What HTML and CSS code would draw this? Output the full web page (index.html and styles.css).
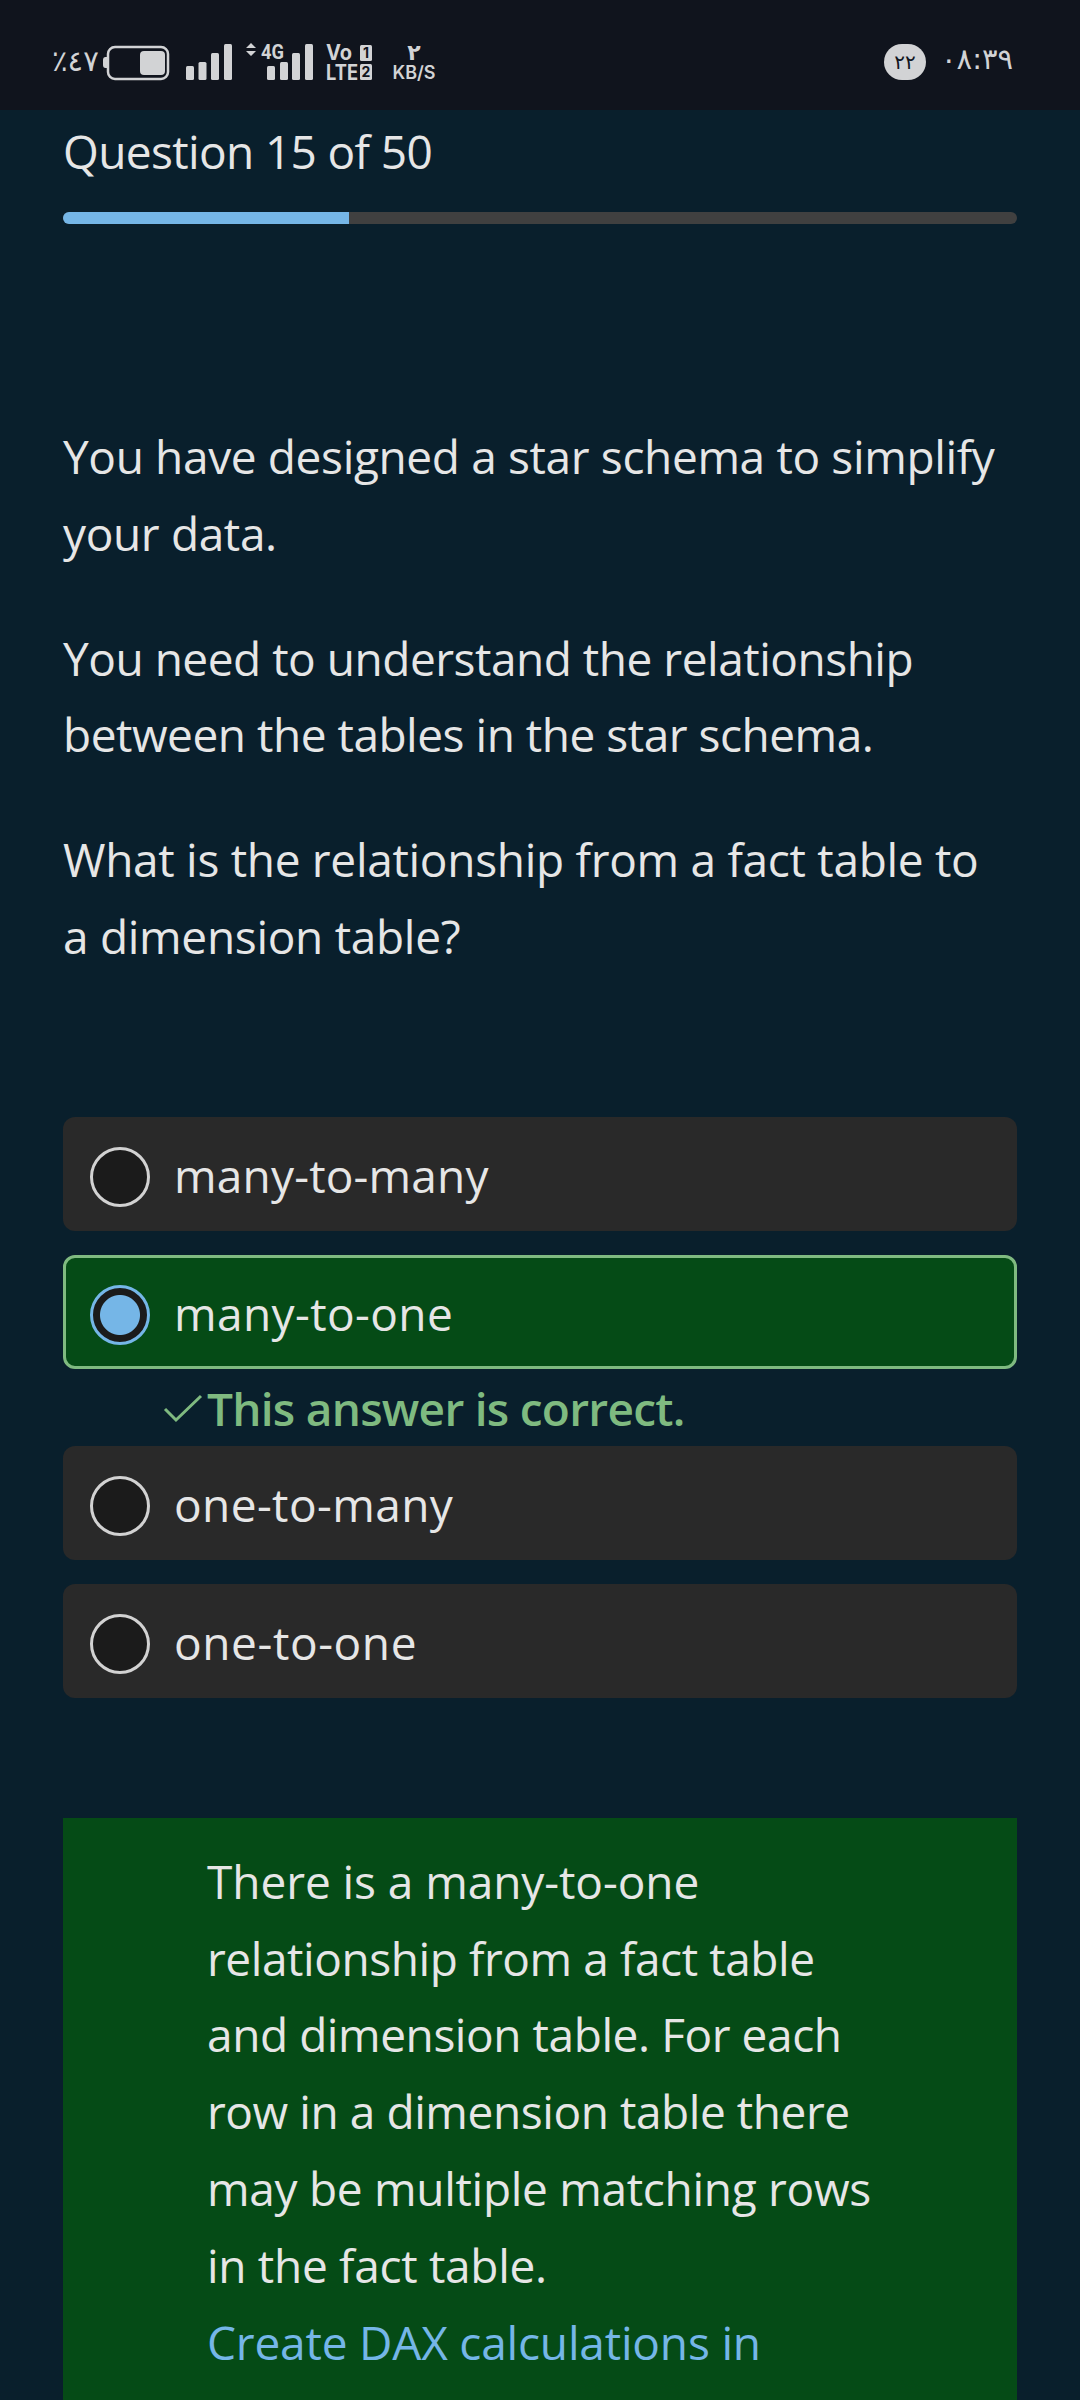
FILE: index.html
```html
<!DOCTYPE html>
<html lang="en">
<head>
<meta charset="utf-8">
<title>Practice assessment</title>
<link rel="stylesheet" href="styles.css">
</head>
<body>
<header class="status">
  <span class="percent"><bdo dir="ltr">٪٤٧</bdo></span>
  <svg class="battery" width="68" height="36" viewBox="0 0 68 36"><path d="M5 12H3.500Q1 12 1 15V20Q1 23 3.500 23H5Z" fill="#d2d3d5"/><rect x="6" y="2" width="60" height="32" rx="7" fill="none" stroke="#d2d3d5" stroke-width="2.500"/><rect x="38" y="6" width="25" height="24" rx="4" fill="#d2d3d5"/></svg>
  <svg class="bars" width="46" height="36" viewBox="0 0 46 36" fill="#d2d3d5"><rect x="0" y="22" width="8" height="14" rx="1.500"/><rect x="12.500" y="18" width="8" height="18" rx="1.500"/><rect x="25" y="9" width="8" height="27" rx="1.500"/><rect x="38" y="0" width="8" height="36" rx="1.500"/></svg>
  <svg class="mobile" width="67" height="38" viewBox="0 0 67 38" fill="#d2d3d5"><path d="M0 6L5 1L10 6ZM0 9H10L5 14Z"/><text class="gen" x="15" y="17" textLength="23" lengthAdjust="spacingAndGlyphs">4G</text><rect x="21" y="24" width="8" height="14" rx="1.500"/><rect x="34" y="20" width="8" height="18" rx="1.500"/><rect x="46" y="11" width="8" height="27" rx="1.500"/><rect x="59" y="2" width="8" height="36" rx="1.500"/></svg>
  <svg class="volte" width="47" height="38" viewBox="0 0 47 38" fill="#d2d3d5"><text class="vo" x="0" y="17" textLength="26" lengthAdjust="spacingAndGlyphs">Vo</text><text class="vo" x="0" y="37" textLength="32" lengthAdjust="spacingAndGlyphs">LTE</text><rect x="34" y="2" width="12" height="16" rx="1.500"/><rect x="34" y="21" width="12" height="16" rx="1.500"/><text class="sim" x="40" y="15">1</text><text class="sim" x="40" y="34">2</text></svg>
  <span class="speed"><span class="rate">۲</span><span class="unit">KB/S</span></span>
  <span class="badge">۲۲</span>
  <span class="clock"><bdo dir="ltr">۰۸:۳۹</bdo></span>
</header>
<main class="page">
  <h1 class="title">Question 15 of 50</h1>
  <div class="progress"><div class="progress-fill" style="width:30%"></div></div>
  <section class="question">
    <p>You have designed a star schema to simplify<br>your data.</p>
    <p class="tight">You need to understand the relationship<br>between the tables in the star schema.</p>
    <p class="loose">What is the relationship from a fact table to<br>a dimension table?</p>
  </section>
  <section class="options">
    <div class="option"><span class="radio"></span><span class="label">many-to-many</span></div>
    <div class="option correct"><span class="radio checked"></span><span class="label wide">many-to-one</span></div>
    <div class="result"><svg width="40" height="30" viewBox="0 0 40 30"><path d="M2 15L13 26L38 2" fill="none" stroke="#7fba80" stroke-width="3"/></svg><span>This answer is correct.</span></div>
    <div class="option"><span class="radio"></span><span class="label wide">one-to-many</span></div>
    <div class="option"><span class="radio"></span><span class="label wider">one-to-one</span></div>
  </section>
  <section class="explain">
    <p><span class="lead">There is a many-to-one</span><br>relationship from a fact table<br>and dimension table. For each<br>row in a dimension table there<br><span class="loose">may be multiple matching rows</span><br><span class="loose">in the fact table.</span><br><a>Create DAX calculations in</a></p>
  </section>
</main>
</body>
</html>
```
FILE: styles.css
```css
* { box-sizing: border-box; }
body { margin: 0; width: 1080px; height: 2400px; overflow: hidden; background: #091f2c; color: #e6e6e6; font: 46px/76.8px "Open Sans", sans-serif; white-space: nowrap; }
p, h1 { margin: 0; font-weight: 400; }
.status { height: 110px; background: #10141d; color: #d2d3d5; display: flex; align-items: flex-start; padding-left: 52px; line-height: 1; }
.percent { width: 50px; margin-top: 44px; font: 29px/34px "DejaVu Sans", sans-serif; }
.battery { margin-top: 45px; }
.bars { margin: 44px 0 0 16px; }
.mobile { margin: 42px 0 0 14px; }
.volte { margin: 43px 0 0 13px; }
.status svg { overflow: visible; flex: none; }
.gen { font: 700 21px Roboto, sans-serif; }
.vo { font: 700 21px Inter, sans-serif; }
.sim { font: 700 14px Inter, sans-serif; fill: #10141d; text-anchor: middle; }
.speed { margin: 43px 0 0 17px; width: 48px; display: flex; flex-direction: column; align-items: center; }
.rate { font: 700 22px/20px "DejaVu Sans", sans-serif; }
.unit { font: 600 18px/20px Inter, sans-serif; }
.badge { margin: 44px 0 0 446px; width: 42px; height: 36px; border-radius: 18px; background: #d2d3d5; color: #10141d; font: 20px/36px "DejaVu Sans", sans-serif; text-align: center; }
.clock { margin: 42px 0 0 15px; font: 29px/34px "DejaVu Sans", sans-serif; letter-spacing: -1.5px; }
.page { padding: 0 63px; }
.title { font-size: 46px; line-height: 72px; padding-top: 5px; letter-spacing: -.63px; }
.progress { height: 12px; margin-top: 25px; border-radius: 6px; background: #404040; overflow: hidden; }
.progress-fill { height: 12px; background: #75b6e7; }
.question { padding-top: 194px; display: flex; flex-direction: column; gap: 48px; letter-spacing: -.36px; }
.tight { letter-spacing: -.48px; }
.loose { letter-spacing: -.3px; }
.options { margin-top: 142px; }
.option { height: 114px; margin-bottom: 24px; border-radius: 12px; background: #292929; padding-left: 27px; display: flex; align-items: center; gap: 24px; border: 0 solid #7fba80; }
.correct { background: #054b16; border-width: 3px; padding-left: 24px; margin-bottom: 0; }
.label { padding-top: 4px; letter-spacing: .19px; }
.label.wide { letter-spacing: .4px; }
.label.wider { letter-spacing: .6px; }
.radio { width: 60px; height: 60px; border-radius: 50%; border: 3px solid #d2d2d2; background: #1b1b1b; margin-top: 6px; }
.checked { border-color: #75b6e7; background: radial-gradient(circle, #75b6e7 19.500px, #1b1b1b 20.500px); }
.result { height: 77px; padding: 3px 0 0 100px; display: flex; align-items: center; gap: 4px; color: #7fba80; font-weight: 600; letter-spacing: -.73px; }
.explain { margin-top: 120px; height: 582px; background: #054b16; padding: 25px 0 0 144px; letter-spacing: -.43px; }
.lead { letter-spacing: -.07px; }
a { color: #75b6e7; letter-spacing: -.18px; }
```
